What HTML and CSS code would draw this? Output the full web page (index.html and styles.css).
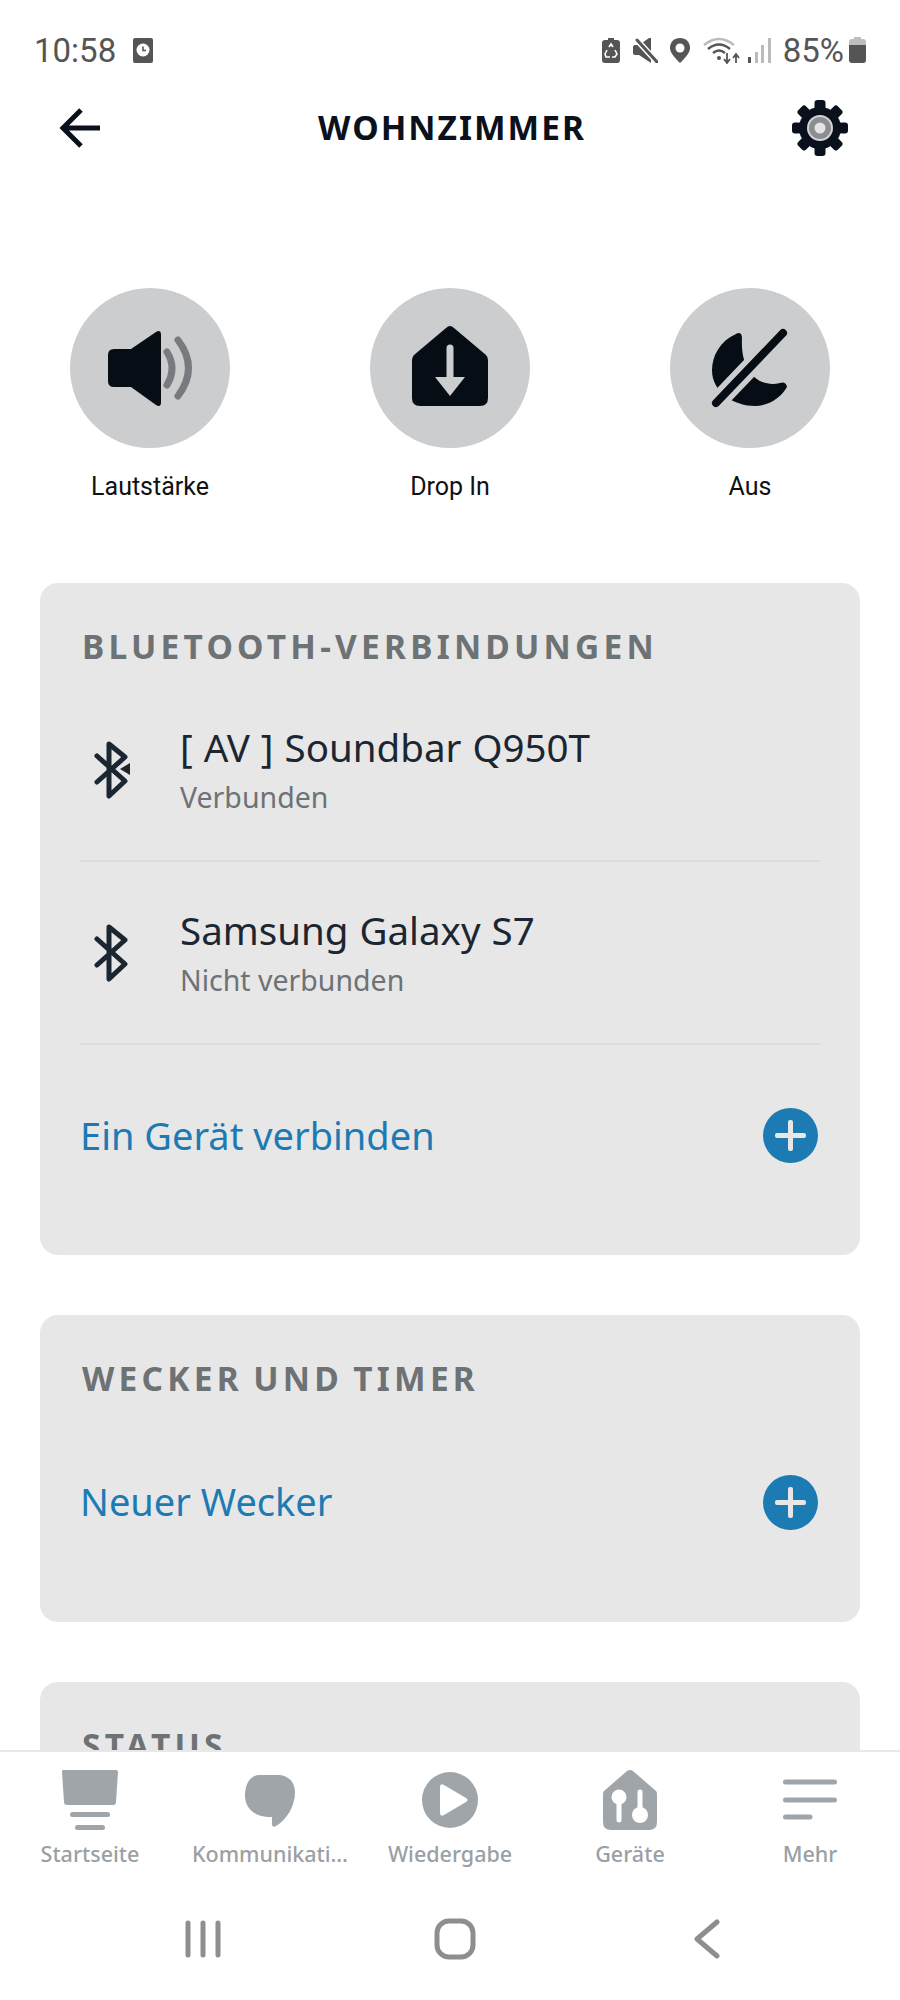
FILE: index.html
```html
<!DOCTYPE html>
<html lang="de">
<head>
    <meta charset="UTF-8">
    <meta name="viewport" content="width=device-width, initial-scale=1.0">
    <title>Wohnzimmer</title>
    <link rel="stylesheet" href="styles.css">
</head>
<body>
    <div class="status-bar">
        <span class="status-time">10:58</span>
        <svg class="status-clock" width="20" height="25" viewBox="0 0 20 25">
            <rect width="20" height="25" rx="2" fill="#555"/>
            <circle cx="10" cy="12" r="6.5" fill="#fff"/>
            <path d="M10 8.5V12.5H13" fill="none" stroke="#555" stroke-width="1.6"/>
        </svg>
        <div class="status-right">
            <svg width="18" height="25" viewBox="0 0 18 25">
                <path d="M6 0H12V2H15Q18 2 18 5V22Q18 25 15 25H3Q0 25 0 22V5Q0 2 3 2H6Z" fill="#555"/>
                <path d="M7 9L9 6L11 9M13 12L15 16L13 19H10M8 19H4L3 16L5 12" fill="none" stroke="#fff" stroke-width="1.6"/>
            </svg>
            <svg class="gap-mute" width="25" height="25" viewBox="0 0 25 25">
                <path d="M0 9Q0 7 2 7H6L16 0H18V25L6 17H2Q0 17 0 15Z" fill="#555"/>
                <path d="M3 1L24 24" stroke="#fff" stroke-width="6"/>
                <path d="M4 2L24 24" stroke="#555" stroke-width="3" stroke-linecap="round"/>
            </svg>
            <svg class="gap-pin" width="20" height="25" viewBox="0 0 20 25">
                <path d="M10 0C16 0 20 4 20 10C20 15 14 21 10 25C6 21 0 15 0 10C0 4 4 0 10 0Z" fill="#555"/>
                <circle cx="10" cy="10" r="4.5" fill="#fff"/>
            </svg>
            <svg class="gap-wifi" width="37" height="27" viewBox="0 0 37 27">
                <path d="M1 8Q16 -4 31 8" fill="none" stroke="#bbb" stroke-width="2.4"/>
                <path d="M5 12Q16 3 27 12" fill="none" stroke="#555" stroke-width="2.4"/>
                <path d="M10 16Q16 11 22 16" fill="none" stroke="#555" stroke-width="2.4"/>
                <circle cx="16" cy="21" r="2" fill="#555"/>
                <path d="M24 16V25M21 22L24 26L27 22M33 26V18M30 21L33 17L36 21" fill="none" stroke="#555" stroke-width="1.8"/>
            </svg>
            <svg class="gap-signal" width="23" height="25" viewBox="0 0 23 25">
                <rect x="0" y="19" width="3" height="6" fill="#555"/>
                <rect x="7" y="14" width="3" height="11" fill="#bbb"/>
                <rect x="13" y="7" width="3" height="18" fill="#bbb"/>
                <rect x="20" y="0" width="3" height="25" fill="#bbb"/>
            </svg>
            <span class="status-battery-text">85%</span>
            <svg class="gap-battery" width="17" height="26" viewBox="0 0 17 26">
                <path d="M5 0H12V2H14Q17 2 17 5V8H0V5Q0 2 3 2H5Z" fill="#bdbdbd"/>
                <path d="M0 8H17V23Q17 26 14 26H3Q0 26 0 23Z" fill="#555"/>
            </svg>
        </div>
    </div>

    <header class="top-bar">
        <svg class="back-icon" width="42" height="42" viewBox="0 0 42 42">
            <path d="M41 21H4M22 3L4 21L22 39" fill="none" stroke="#0b111c" stroke-width="5"/>
        </svg>
        <h1 class="page-title">WOHNZIMMER</h1>
        <svg class="gear-icon" width="58" height="58" viewBox="-29 -29 58 58">
            <rect x="-5.5" y="-28" width="11" height="56" rx="3" fill="#0b111c"/>
            <rect x="-5.5" y="-28" width="11" height="56" rx="3" fill="#0b111c" transform="rotate(45)"/>
            <rect x="-5.5" y="-28" width="11" height="56" rx="3" fill="#0b111c" transform="rotate(90)"/>
            <rect x="-5.5" y="-28" width="11" height="56" rx="3" fill="#0b111c" transform="rotate(135)"/>
            <circle r="21" fill="#0b111c"/>
            <circle r="13" fill="#d4d4d4"/>
            <circle r="11" fill="#8b8d90"/>
            <circle r="5.5" fill="#e4e4e4"/>
        </svg>
    </header>

    <main class="content">
        <section class="actions">
            <div class="action">
                <div class="action-circle">
                    <svg width="160" height="160" viewBox="0 0 160 160">
                        <path d="M44 61H61L86 44Q91 41 91 47V114Q91 120 86 117L61 99H44Q38 99 38 93V67Q38 61 44 61Z" fill="#060d15"/>
                        <path d="M97 64Q107 80 97 97" fill="none" stroke="#777b7f" stroke-width="7" stroke-linecap="round"/>
                        <path d="M108 52Q129 80 108 108" fill="none" stroke="#777b7f" stroke-width="7" stroke-linecap="round"/>
                    </svg>
                </div>
                <span class="action-label">Lautstärke</span>
            </div>
            <div class="action">
                <div class="action-circle">
                    <svg width="160" height="160" viewBox="0 0 160 160">
                        <path d="M76 40Q80 36 84 40L116 67Q118 69 118 72V110Q118 118 110 118H50Q42 118 42 110V72Q42 69 44 67Z" fill="#060d15"/>
                        <path d="M80 60V90" stroke="#cbcdcf" stroke-width="7" stroke-linecap="round"/>
                        <path d="M65 89H95L80 108Z" fill="#cbcdcf"/>
                    </svg>
                </div>
                <span class="action-label">Drop In</span>
            </div>
            <div class="action">
                <div class="action-circle">
                    <svg width="160" height="160" viewBox="0 0 160 160">
                        <path d="M66 46C50 53 42 68 42 82C42 105 65 118 85 118C100 118 112 108 117 99C116 94 113 94 110 95C90 100 70 85 72 50C72 45 69 44 66 46Z" fill="#060d15"/>
                        <path d="M113 45L46 115" stroke="#cbcdcf" stroke-width="19" stroke-linecap="round"/>
                        <path d="M113 45L46 115" stroke="#060d15" stroke-width="8" stroke-linecap="round"/>
                    </svg>
                </div>
                <span class="action-label">Aus</span>
            </div>
        </section>

        <section class="card">
            <h2 class="card-title">BLUETOOTH-VERBINDUNGEN</h2>
            <div class="device-row">
                <svg class="bt-icon" width="40" height="60" viewBox="0 0 40 60">
                    <path d="M5 17L33 42L17 57V5L33 18L5 43" fill="none" stroke="#1b2631" stroke-width="5" stroke-linejoin="round" stroke-linecap="round"/>
                    <path d="M28 30L38 24V36Z" fill="#1b2631"/>
                </svg>
                <div class="device-text">
                    <div class="device-name">[ AV ] Soundbar Q950T</div>
                    <div class="device-state">Verbunden</div>
                </div>
            </div>
            <div class="device-row">
                <svg class="bt-icon" width="40" height="60" viewBox="0 0 40 60">
                    <path d="M5 17L33 42L17 57V5L33 18L5 43" fill="none" stroke="#1b2631" stroke-width="5" stroke-linejoin="round" stroke-linecap="round"/>
                </svg>
                <div class="device-text">
                    <div class="device-name">Samsung Galaxy S7</div>
                    <div class="device-state">Nicht verbunden</div>
                </div>
            </div>
            <div class="link-row">
                <span class="link-text">Ein Gerät verbinden</span>
                <span class="plus-btn"></span>
            </div>
        </section>

        <section class="card">
            <h2 class="card-title">WECKER UND TIMER</h2>
            <div class="link-row">
                <span class="link-text">Neuer Wecker</span>
                <span class="plus-btn"></span>
            </div>
        </section>

        <section class="card">
            <h2 class="card-title">STATUS</h2>
        </section>
    </main>

    <nav class="tab-bar">
        <div class="tab">
            <svg width="60" height="60" viewBox="0 0 60 60">
                <path d="M3 0H56Q58 0 58 2L56 32Q56 35 53 35H7Q4 35 4 32L2 2Q2 0 3 0Z" fill="#a0a5a9"/>
                <rect x="10" y="42" width="40" height="5" rx="2.5" fill="#a0a5a9"/>
                <rect x="15" y="55" width="30" height="5" rx="2.5" fill="#a0a5a9"/>
            </svg>
            <span class="tab-label">Startseite</span>
        </div>
        <div class="tab">
            <svg width="60" height="60" viewBox="0 0 60 60">
                <path d="M20 5H38C48 5 55 12 55 22C55 37 46 50 36 56Q32 58 32 54V47H28C15 47 5 38 5 26C5 14 10 5 20 5Z" fill="#a0a5a9"/>
            </svg>
            <span class="tab-label">Kommunikati…</span>
        </div>
        <div class="tab">
            <svg width="60" height="60" viewBox="0 0 60 60">
                <circle cx="30" cy="30" r="28" fill="#a0a5a9"/>
                <path d="M20 17Q20 13 24 15L46 28Q49 30 46 32L24 45Q20 47 20 43Z" fill="#fff"/>
            </svg>
            <span class="tab-label">Wiedergabe</span>
        </div>
        <div class="tab">
            <svg width="60" height="60" viewBox="0 0 60 60">
                <path d="M27 1Q30 -1 33 1L56 21Q57 22 57 24V52Q57 60 49 60H11Q3 60 3 52V24Q3 22 4 21Z" fill="#a0a5a9"/>
                <circle cx="19" cy="27" r="7.5" fill="#fff"/>
                <path d="M19 30V50" stroke="#fff" stroke-width="5" stroke-linecap="round"/>
                <path d="M40 22V42" stroke="#fff" stroke-width="5" stroke-linecap="round"/>
                <circle cx="40" cy="45" r="8" fill="#fff"/>
            </svg>
            <span class="tab-label">Geräte</span>
        </div>
        <div class="tab">
            <svg width="60" height="60" viewBox="0 0 60 60">
                <path d="M5.5 12H54.5M5.5 30H54.5M5.5 47H30" stroke="#a0a5a9" stroke-width="5" stroke-linecap="round"/>
            </svg>
            <span class="tab-label">Mehr</span>
        </div>
    </nav>

    <div class="system-nav">
        <svg width="40" height="40" viewBox="0 0 40 40">
            <path d="M5 4V36M20 4V36M35 4V36" stroke="#8e8e8e" stroke-width="5" stroke-linecap="round"/>
        </svg>
        <svg width="44" height="44" viewBox="0 0 44 44">
            <rect x="4" y="4" width="36" height="36" rx="12" fill="none" stroke="#8e8e8e" stroke-width="5"/>
        </svg>
        <svg width="40" height="40" viewBox="0 0 40 40">
            <path d="M30 3L10 20L30 37" fill="none" stroke="#8e8e8e" stroke-width="5" stroke-linecap="round" stroke-linejoin="round"/>
        </svg>
    </div>
</body>
</html>
```

FILE: styles.css
```css
html, body {
    margin: 0;
    padding: 0;
}

body {
    width: 900px;
    height: 2000px;
    display: flex;
    flex-direction: column;
    overflow: hidden;
    background: #fff;
    font-family: 'Noto Sans', 'Liberation Sans', sans-serif;
}

/* status bar */
.status-bar {
    height: 100px;
    flex: none;
    display: flex;
    align-items: center;
    padding: 0 34px;
    color: #555;
    font-family: 'Roboto', sans-serif;
    font-size: 33px;
}

.status-time {
    width: 99px;
}

.status-right {
    margin-left: auto;
    display: flex;
    align-items: center;
}

.gap-mute { margin-left: 13px; }
.gap-pin { margin-left: 12px; }
.gap-wifi { margin-left: 13px; }
.gap-signal { margin-left: 8px; }
.gap-battery { margin-left: 5px; }

.status-battery-text {
    margin-left: 12px;
}

/* top bar */
.top-bar {
    height: 56px;
    flex: none;
    display: flex;
    align-items: center;
    justify-content: space-between;
    padding: 0 51px 0 59px;
}

.back-icon {
    margin-right: 8px;
}

.page-title {
    margin: 0 0 0 4px;
    padding-bottom: 2px;
    font-size: 33.5px;
    font-weight: 700;
    letter-spacing: 2px;
    color: #0b111c;
}

/* scrolling content */
.content {
    flex: 1;
    overflow: hidden;
    padding: 0 40px;
}

.actions {
    display: flex;
    justify-content: space-between;
    padding: 132px 30px 0;
}

.action {
    width: 160px;
    display: flex;
    flex-direction: column;
    align-items: center;
}

.action-circle {
    width: 160px;
    height: 160px;
    border-radius: 50%;
    background: #cbcdcf;
}

.action-circle svg {
    display: block;
}

.action-label {
    margin-top: 24px;
    line-height: 30px;
    font-family: 'Roboto', sans-serif;
    font-size: 25px;
    color: #111;
    white-space: nowrap;
}

.card {
    margin-bottom: 60px;
    padding: 43px 40px 29px;
    background: #e7e7e8;
    border-radius: 18px;
}

.actions + .card {
    margin-top: 81px;
}

.card-title {
    margin: 0 0 13px 2px;
    line-height: 40px;
    font-size: 33.5px;
    font-weight: 700;
    letter-spacing: 4.2px;
    word-spacing: -2.5px;
    color: #6d7275;
}

.device-row {
    height: 183px;
    box-sizing: border-box;
    display: flex;
    align-items: flex-start;
    padding-top: 44px;
    border-bottom: 2px solid #dcdcdd;
}

.bt-icon {
    margin: 16px 48px 0 12px;
    flex: none;
}

.device-name {
    line-height: 48px;
    font-size: 38.5px;
    word-spacing: 1px;
    color: #1b2631;
}

.device-state {
    margin-top: 8px;
    line-height: 36px;
    font-size: 28.5px;
    color: #6d7275;
}

.link-row {
    height: 182px;
    display: flex;
    align-items: center;
    justify-content: space-between;
}

.device-row + .link-row {
    height: 181px;
}

.link-text {
    padding-bottom: 2px;
    font-size: 38px;
    color: #1c7bb3;
}

.plus-btn {
    position: relative;
    width: 55px;
    height: 55px;
    margin-right: 2px;
    border-radius: 50%;
    background: #1c7bb3;
}

.plus-btn::before,
.plus-btn::after {
    content: "";
    position: absolute;
    background: #e7e7e8;
    border-radius: 2px;
}

.plus-btn::before {
    left: 12px;
    right: 12px;
    top: 25px;
    height: 5px;
}

.plus-btn::after {
    top: 12px;
    bottom: 12px;
    left: 25px;
    width: 5px;
}

/* bottom tabs */
.tab-bar {
    flex: none;
    height: 128px;
    box-sizing: border-box;
    display: flex;
    padding-top: 18px;
    background: #fff;
    border-top: 2px solid #e8e8e8;
}

.tab {
    width: 180px;
    display: flex;
    flex-direction: column;
    align-items: center;
}

.tab svg {
    display: block;
}

.tab-label {
    margin-top: 9px;
    line-height: 30px;
    font-size: 21.5px;
    font-weight: 500;
    color: #9aa0a4;
    white-space: nowrap;
}

/* android buttons */
.system-nav {
    flex: none;
    height: 122px;
    display: flex;
    align-items: center;
    justify-content: space-between;
    box-sizing: border-box;
    padding: 0 173px 0 183px;
}

.system-nav svg {
    display: block;
}
```
